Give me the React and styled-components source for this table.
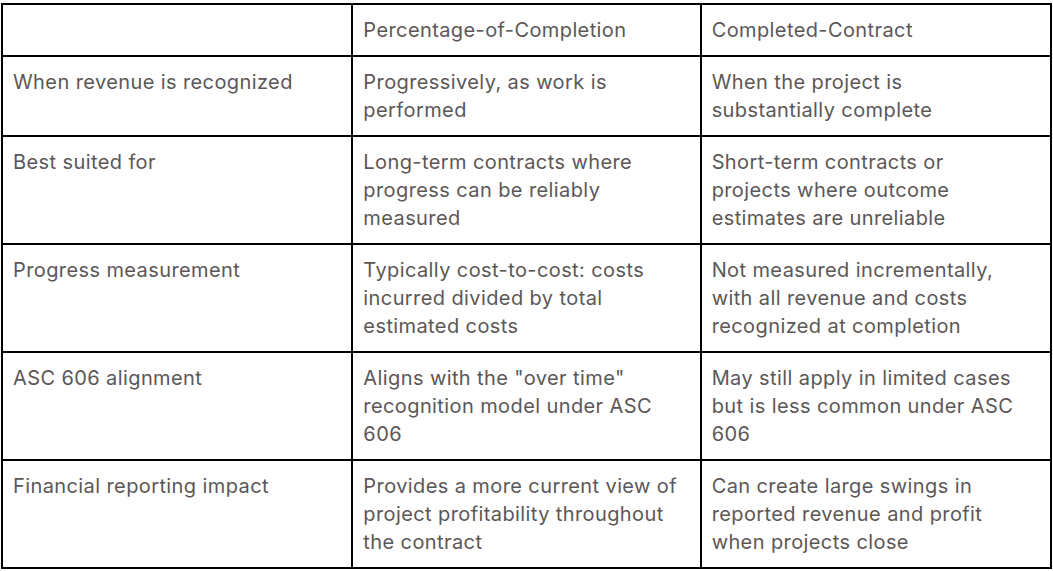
import React from 'react';
import styled, { createGlobalStyle } from 'styled-components';

const GlobalStyle = createGlobalStyle`
  html, body {
    margin: 0;
    padding: 0;
    background: #ffffff;
  }
`;

// each cell keeps the line breaks of the original layout
const rows = [
  {
    label: ['When revenue is recognized'],
    poc: ['Progressively, as work is', 'performed'],
    cc: ['When the project is', 'substantially complete'],
  },
  {
    label: ['Best suited for'],
    poc: ['Long-term contracts where', 'progress can be reliably', 'measured'],
    cc: ['Short-term contracts or', 'projects where outcome', 'estimates are unreliable'],
  },
  {
    label: ['Progress measurement'],
    poc: ['Typically cost-to-cost: costs', 'incurred divided by total', 'estimated costs'],
    cc: ['Not measured incrementally,', 'with all revenue and costs', 'recognized at completion'],
  },
  {
    label: ['ASC 606 alignment'],
    poc: ['Aligns with the "over time"', 'recognition model under ASC', '606'],
    cc: ['May still apply in limited cases', 'but is less common under ASC', '606'],
  },
  {
    label: ['Financial reporting impact'],
    poc: ['Provides a more current view of', 'project profitability throughout', 'the contract'],
    cc: ['Can create large swings in', 'reported revenue and profit', 'when projects close'],
  },
];

const Page = styled.div`
  padding: 3px 0 0 1px;
`;

const Table = styled.table`
  width: 1051px;
  table-layout: fixed;
  border-collapse: separate;
  border-spacing: 0;
  border-top: 2px solid #000;
  border-left: 2px solid #000;
  font-family: Inter, "Noto Sans", sans-serif;
  font-size: 20px;
  line-height: 28px;
  letter-spacing: 0.4px;
  color: #5c5757;
`;

const Cell = styled.td`
  padding: 11px 10px;
  vertical-align: top;
  text-align: left;
  font-weight: 400;
  white-space: nowrap;
  overflow: hidden;
  border-right: 2px solid #000;
  border-bottom: 2px solid #000;
`;

const HeadCell = styled(Cell).attrs({ as: 'th' })``;

const Line = styled.span`
  display: block;
`;

const Lines = ({ lines }) => lines.map((l, i) => <Line key={i}>{l}</Line>);

export default function App() {
  return (
    <>
      <GlobalStyle />
      <Page>
        <Table>
          <colgroup>
            <col style={{ width: '33.4%' }} />
            <col style={{ width: '33.2%' }} />
            <col style={{ width: '33.4%' }} />
          </colgroup>
          <thead>
            <tr>
              <HeadCell></HeadCell>
              <HeadCell>Percentage-of-Completion</HeadCell>
              <HeadCell>Completed-Contract</HeadCell>
            </tr>
          </thead>
          <tbody>
            {rows.map((r) => (
              <tr key={r.label[0]}>
                <Cell><Lines lines={r.label} /></Cell>
                <Cell><Lines lines={r.poc} /></Cell>
                <Cell><Lines lines={r.cc} /></Cell>
              </tr>
            ))}
          </tbody>
        </Table>
      </Page>
    </>
  );
}
